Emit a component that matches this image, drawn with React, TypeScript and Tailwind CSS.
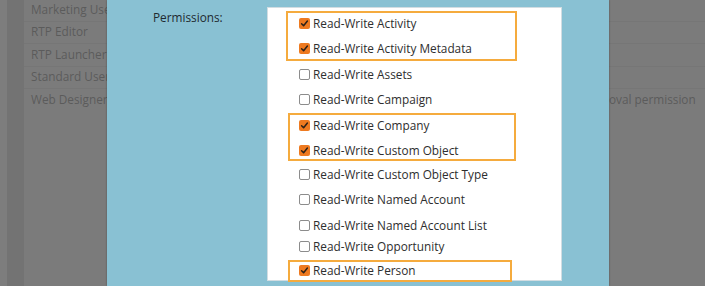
import { Fragment } from "react"

type Item = { label: string; checked: boolean; mt?: string }

const items: Item[] = [
    { label: "Read-Write Activity", checked: true },
    { label: "Read-Write Activity Metadata", checked: true },
    { label: "Read-Write Assets", checked: false, mt: "mt-[1px]" },
    { label: "Read-Write Campaign", checked: false },
    { label: "Read-Write Company", checked: true, mt: "mt-[1px]" },
    { label: "Read-Write Custom Object", checked: true },
    { label: "Read-Write Custom Object Type", checked: false, mt: "mt-[-1px]" },
    { label: "Read-Write Named Account", checked: false },
    { label: "Read-Write Named Account List", checked: false, mt: "mt-[1px]" },
    { label: "Read-Write Opportunity", checked: false, mt: "mt-[-4px]" },
    { label: "Read-Write Person", checked: true, mt: "mt-[-1px]" },
]

// highlight boxes drawn over the list, positions relative to the list box
const highlights = [
    "top-[3px] left-[18px] w-[231px] h-[50px]",
    "top-[105px] left-[20px] w-[228px] h-[48px]",
    "top-[252px] left-[20px] w-[224px] h-[22px]",
]

const roles = ["Marketing User", "RTP Editor", "RTP Launcher", "Standard User", "Web Designer"]

function Box({ checked }: { checked: boolean }) {
    if (checked) {
        return (
            <span className="w-[11px] h-[11px] rounded-[2px] bg-[#ee7a20] flex items-center justify-center shrink-0">
                <svg width="9" height="9" viewBox="0 0 9 9" fill="none">
                    <path d="M1.6 4.8 L3.6 6.8 L7.4 2" stroke="#2b2119" strokeWidth="1.5" strokeLinecap="round" strokeLinejoin="round" />
                </svg>
            </span>
        )
    }
    return <span className="w-[11px] h-[11px] rounded-[2px] border border-[#8c8c8c] bg-white shrink-0" />
}

export default function App() {
    return (
        <div className="w-[705px] h-[286px] flex bg-[#7b7b7b] overflow-hidden font-['Open_Sans',sans-serif]">
            {/* table behind the dialog, left part */}
            <div className="w-[107px] shrink-0 flex">
                <div className="w-[7px] bg-[#7d7d7d]" />
                <div className="w-[17px] bg-[#737373]" />
                <div className="flex-1 flex flex-col mt-[-1px] overflow-hidden">
                    {roles.map((r, i) => (
                        <div key={r} className={`h-[22.5px] shrink-0 flex items-center pl-[7px] text-[11.8px] text-[#5b5b5b] whitespace-nowrap ${i < 4 ? "border-b border-[#767676]" : ""}`}>
                            {r}
                        </div>
                    ))}
                </div>
            </div>

            {/* dialog */}
            <div className="w-[502px] shrink-0 bg-[#89c1d3] flex shadow-[0_0_2px_rgba(0,0,0,0.35)] z-10">
                <div className="w-[160px] shrink-0 pl-[46px] pt-[9px] text-[11.8px] text-[#1e2a30]">Permissions:</div>
                <div className="mt-[7px] h-[274px] w-[295px] bg-white border border-[#d2dde2] relative">
                    <div className="pt-[3px] flex flex-col">
                        {items.map((it) => (
                            <Fragment key={it.label}>
                                <div className={`h-[25px] shrink-0 flex items-center gap-[3px] pl-[31px] text-[11.8px] text-[#2e2e2e] whitespace-nowrap ${it.mt ?? ""}`}>
                                    <Box checked={it.checked} />
                                    <span>{it.label}</span>
                                </div>
                            </Fragment>
                        ))}
                    </div>
                    {highlights.map((h) => (
                        <div key={h} className={`absolute border-2 border-[#f5ab3e] ${h}`} />
                    ))}
                </div>
            </div>

            {/* table behind the dialog, right part */}
            <div className="flex-1 flex flex-col mt-[-1px] overflow-hidden">
                {["", "", "", ""].map((_, i) => (
                    <div key={i} className="h-[22.5px] shrink-0 border-b border-[#767676]" />
                ))}
                <div className="h-[22.5px] shrink-0 flex items-center text-[11.8px] text-[#5b5b5b] whitespace-nowrap">
                    oval permission
                </div>
            </div>
        </div>
    )
}
